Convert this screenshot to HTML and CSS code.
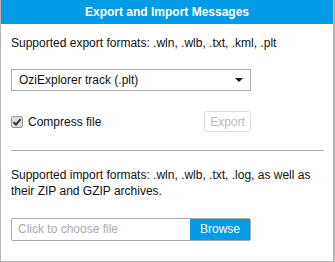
FILE: index.html
```html
<!DOCTYPE html>
<html>
<head>
<meta charset="utf-8">
<link rel="stylesheet" href="styles.css">
</head>
<body>
<div class="dialog">
  <div class="header">Export and Import Messages</div>
  <div class="content">
    <p class="text export-text">Supported export formats: .wln, .wlb, .txt, .kml, .plt</p>
    <div class="select">
      <span>OziExplorer track (.plt)</span>
      <span class="caret"></span>
    </div>
    <div class="row">
      <label class="check"><span class="box"><svg width="10" height="10" viewBox="0 0 10 10"><path d="M1.5 5.2 L4 7.6 L8.6 2.2" fill="none" stroke="#333" stroke-width="2"/></svg></span>Compress file</label>
      <button class="export" disabled>Export</button>
    </div>
    <hr class="sep">
    <p class="text import-text">Supported import formats: .wln, .wlb, .txt, .log, as well as their ZIP and GZIP archives.</p>
    <div class="file">
      <span class="placeholder">Click to choose file</span>
      <span class="browse">Browse</span>
    </div>
  </div>
</div>
</body>
</html>
```
FILE: styles.css
```css
html, body { margin: 0; padding: 0; background: #fff; }
body { font-family: "Liberation Sans", Arial, sans-serif; font-size: 12px; color: #111; }
.dialog {
  box-sizing: border-box;
  width: 335px;
  height: 262px;
  border: 1px solid #b5b5b5;
  border-top: none;
  border-right-width: 2px;
}
.header {
  background: #039be5;
  color: #fff;
  font-weight: bold;
  font-size: 12px;
  height: 24px;
  line-height: 24px;
  text-align: center;
}
.content { padding: 0 9px 0 10px; }
.text { margin: 0; line-height: 16px; }
.export-text { padding-top: 11px; }
.select {
  box-sizing: border-box;
  margin-top: 18px;
  width: 240px;
  height: 22px;
  border: 1px solid #aaa;
  display: flex;
  align-items: center;
  justify-content: space-between;
  padding: 0 6px 0 7px;
}
.caret {
  width: 0; height: 0;
  border-left: 4px solid transparent;
  border-right: 4px solid transparent;
  border-top: 4px solid #111;
  margin-right: 1px;
}
.row {
  width: 240px;
  margin-top: 20px;
  display: flex;
  align-items: center;
  justify-content: space-between;
}
.check { display: flex; align-items: center; gap: 5px; }
.box {
  box-sizing: border-box;
  width: 12px; height: 12px;
  border: 1px solid #999;
  border-radius: 2px;
  background: #ddd;
  display: flex; align-items: center; justify-content: center;
}
.export {
  box-sizing: border-box;
  height: 21px;
  width: 47px;
  padding: 0;
  border: 1px solid #ddd;
  border-radius: 3px;
  background: #fff;
  color: #bbb;
  font-family: inherit;
  font-size: 12px;
}
.sep {
  margin: 18px 0 0 0;
  border: none;
  border-top: 1px solid #aaa;
  height: 0;
}
.import-text { padding-top: 16px; }
.file {
  box-sizing: border-box;
  margin-top: 19px;
  width: 240px;
  height: 23px;
  border: 1px solid #aaa;
  border-radius: 2px;
  display: flex;
  align-items: stretch;
}
.placeholder { flex: 1; color: #aaa; padding-left: 6px; line-height: 21px; }
.browse {
  width: 60px;
  background: #039be5;
  color: #fff;
  text-align: center;
  line-height: 21px;
  font-size: 12px;
}
```
